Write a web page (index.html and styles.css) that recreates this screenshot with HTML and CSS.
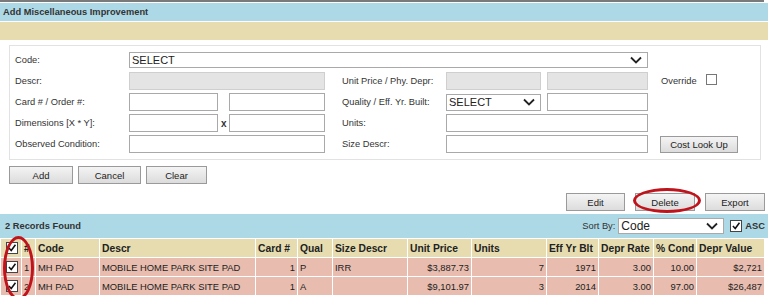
FILE: index.html
```html
<!DOCTYPE html>
<html lang="en">
<head>
    <meta charset="UTF-8">
    <title>Add Miscellaneous Improvement</title>
    <link rel="stylesheet" href="styles.css">
</head>
<body>
    <div class="top-line"></div>
    <div class="title-bar">Add Miscellaneous Improvement</div>
    <div class="tan-bar"></div>

    <!-- Entry form -->
    <div class="form-box">
        <div class="form-grid">
            <label class="lbl">Code:</label>
            <select class="sel sel-code"><option>SELECT</option></select>
            <div></div>

            <label class="lbl">Descr:</label>
            <input class="inp span-3 ro" type="text" readonly>
            <div></div>
            <label class="lbl">Unit Price / Phy. Depr:</label>
            <input class="inp ro" type="text" readonly>
            <div></div>
            <input class="inp ro" type="text" readonly>
            <div class="override">Override <span class="box"></span></div>

            <label class="lbl">Card # / Order #:</label>
            <input class="inp" type="text">
            <div></div>
            <input class="inp" type="text">
            <div></div>
            <label class="lbl">Quality / Eff. Yr. Built:</label>
            <select class="sel"><option>SELECT</option></select>
            <div></div>
            <input class="inp" type="text">
            <div></div>

            <label class="lbl">Dimensions [X * Y]:</label>
            <input class="inp" type="text">
            <div class="times">x</div>
            <input class="inp" type="text">
            <div></div>
            <label class="lbl">Units:</label>
            <input class="inp span-3" type="text">
            <div></div>

            <label class="lbl">Observed Condition:</label>
            <input class="inp span-3" type="text">
            <div></div>
            <label class="lbl">Size Descr:</label>
            <input class="inp span-3" type="text">
            <div><button class="btn btn-lookup">Cost Look Up</button></div>
        </div>
    </div>

    <div class="form-actions">
        <button class="btn w-add">Add</button>
        <button class="btn w-cancel">Cancel</button>
        <button class="btn w-clear">Clear</button>
    </div>

    <div class="grid-actions">
        <button class="btn w-edit">Edit</button>
        <button class="btn w-delete">Delete<span class="ring ring-delete"></span></button>
        <button class="btn w-export">Export</button>
    </div>

    <!-- Results -->
    <div class="records-bar">
        <span class="found">2 Records Found</span>
        <div class="sort">
            <span>Sort By:</span>
            <select class="sel sel-sort"><option>Code</option></select>
            <span class="chk"><svg viewBox="0 0 13 13"><path d="M2.5 6.5l3 3.2 5.5-7.5"/></svg></span>
            <span class="asc">ASC</span>
        </div>
    </div>

    <div class="table-wrap">
        <span class="ring ring-checks"></span>
        <table class="results">
            <colgroup>
                <col style="width:20px"><col style="width:13px"><col style="width:63px"><col style="width:155px">
                <col style="width:41px"><col style="width:34px"><col style="width:74px"><col style="width:63px">
                <col style="width:74px"><col style="width:51px"><col style="width:54px"><col style="width:42px">
                <col style="width:67px">
            </colgroup>
            <thead>
                <tr>
                    <th><span class="chk"><svg viewBox="0 0 13 13"><path d="M2.5 6.5l3 3.2 5.5-7.5"/></svg></span></th>
                    <th>#</th>
                    <th>Code</th>
                    <th>Descr</th>
                    <th>Card #</th>
                    <th>Qual</th>
                    <th>Size Descr</th>
                    <th>Unit Price</th>
                    <th>Units</th>
                    <th>Eff Yr Blt</th>
                    <th>Depr Rate</th>
                    <th>% Cond</th>
                    <th>Depr Value</th>
                </tr>
            </thead>
            <tbody>
                <tr>
                    <td><span class="chk"><svg viewBox="0 0 13 13"><path d="M2.5 6.5l3 3.2 5.5-7.5"/></svg></span></td>
                    <td>1</td>
                    <td>MH PAD</td>
                    <td>MOBILE HOME PARK SITE PAD</td>
                    <td class="num">1</td>
                    <td>P</td>
                    <td>IRR</td>
                    <td class="num">$3,887.73</td>
                    <td class="num">7</td>
                    <td class="num">1971</td>
                    <td class="num">3.00</td>
                    <td class="num">10.00</td>
                    <td class="num">$2,721</td>
                </tr>
                <tr>
                    <td><span class="chk"><svg viewBox="0 0 13 13"><path d="M2.5 6.5l3 3.2 5.5-7.5"/></svg></span></td>
                    <td>2</td>
                    <td>MH PAD</td>
                    <td>MOBILE HOME PARK SITE PAD</td>
                    <td class="num">1</td>
                    <td>A</td>
                    <td></td>
                    <td class="num">$9,101.97</td>
                    <td class="num">3</td>
                    <td class="num">2014</td>
                    <td class="num">3.00</td>
                    <td class="num">97.00</td>
                    <td class="num">$26,487</td>
                </tr>
            </tbody>
        </table>
    </div>
</body>
</html>
```

FILE: styles.css
```css
* {
    margin: 0;
    padding: 0;
    box-sizing: border-box;
}

body {
    font-family: 'Liberation Sans', Arial, sans-serif;
    font-size: 9.3px;
    color: #333;
    background: #fff;
    width: 768px;
    overflow: hidden;
}

/* Header bars */
.top-line {
    width: 764px;
    height: 2px;
    background: #7a7a7a;
    margin-bottom: 1px;
}

.title-bar {
    height: 18px;
    line-height: 18px;
    background: #add8e6;
    font-weight: bold;
    color: #333;
    padding-left: 3px;
}

.tan-bar {
    height: 18px;
    margin-top: 1px;
    background: #e6dcb0;
}

/* Form */
.form-box {
    margin: 5px 7px 0 9px;
    border: 1px solid #e2e2e2;
    padding: 5px 0 6px 5px;
}

.form-grid {
    display: grid;
    grid-template-columns: 114px 89px 11px 96px 17px 104px 95px 6px 101px auto;
    grid-auto-rows: 18px;
    row-gap: 3px;
    align-items: center;
}

.lbl {
    color: #333;
}

.inp {
    height: 18px;
    width: 100%;
    border: 1px solid #a9a9a9;
    background: #fff;
    font: inherit;
}

.inp.ro {
    background: #e4e4e4;
    border-color: #cfcfcf;
}

.span-3 {
    grid-column: span 3;
}

.sel {
    -webkit-appearance: none;
    appearance: none;
    height: 17px;
    width: 100%;
    border: 1px solid #a9a9a9;
    background: #fff url('data:image/svg+xml;utf8,<svg xmlns="http://www.w3.org/2000/svg" width="12" height="8" viewBox="0 0 12 8"><path d="M1 1.5l5 5 5-5" fill="none" stroke="%23222" stroke-width="1.8"/></svg>') no-repeat right 5px center;
    font-family: 'Liberation Sans', Arial, sans-serif;
    font-size: 11px;
    color: #222;
    padding-left: 2px;
    line-height: 15px;
}

.sel-code {
    grid-column: span 8;
    height: 16px;
}

.times {
    font-weight: bold;
    font-size: 10px;
    padding-left: 3px;
}

.override {
    padding-left: 13px;
    display: flex;
    align-items: center;
    gap: 9px;
}

.override .box {
    width: 11px;
    height: 11px;
    border: 1px solid #777;
    background: #fff;
    margin-top: -4px;
}

/* Buttons */
.btn {
    position: relative;
    height: 18px;
    border: 1px solid #9a9a9a;
    background: linear-gradient(#f4f4f4, #dcdcdc);
    font-family: 'Liberation Sans', Arial, sans-serif;
    font-size: 9.5px;
    color: #222;
}

.btn-lookup {
    margin-left: 12px;
    width: 78px;
    height: 17px;
}

.form-actions {
    display: flex;
    gap: 5px;
    margin: 6px 0 0 9px;
}

.w-add { width: 64px; }
.w-cancel { width: 63px; }
.w-clear { width: 61px; }

.grid-actions {
    display: flex;
    justify-content: flex-end;
    gap: 10px;
    margin: 9px 3px 0 0;
}

.w-edit { width: 59px; }
.w-delete { width: 60px; }
.w-export { width: 60px; }

/* Hand-drawn annotation rings */
.ring {
    position: absolute;
    border: 3px solid #c0141c;
    border-radius: 50%;
    pointer-events: none;
}

.ring-delete {
    left: -3px;
    top: -6px;
    width: 68px;
    height: 25px;
}

/* Records bar */
.records-bar {
    height: 24px;
    margin-top: 3px;
    background: #add8e6;
    display: flex;
    align-items: center;
    justify-content: space-between;
    padding: 0 3px 0 5px;
}

.found {
    font-weight: bold;
    color: #333;
}

.sort {
    display: flex;
    align-items: center;
    gap: 3px;
}

.sel-sort {
    width: 106px;
    height: 16px;
    font-size: 12px;
    margin-right: 3px;
}

.asc {
    font-weight: bold;
    color: #333;
}

.chk {
    display: inline-block;
    width: 12px;
    height: 12px;
    border: 1px solid #444;
    background: #fff;
    vertical-align: middle;
}

.chk svg {
    display: block;
    width: 10px;
    height: 10px;
}

.chk path {
    fill: none;
    stroke: #111;
    stroke-width: 2;
}

/* Results table */
.table-wrap {
    position: relative;
    width: 766px;
}

.ring-checks {
    left: 3px;
    top: -2px;
    width: 31px;
    height: 64px;
}

.results {
    border-collapse: separate;
    border-spacing: 1px;
    table-layout: fixed;
    width: 765px;
    font-size: 9.4px;
}

.results th {
    background: #e6dcb0;
    font-weight: bold;
    font-size: 10.3px;
    text-align: left;
    height: 18px;
    padding: 0 2px;
    color: #222;
    white-space: nowrap;
}

.results td {
    background: #e8bdaf;
    height: 18px;
    padding: 0 2px;
    color: #222;
    white-space: nowrap;
}

.results th:first-child,
.results td:first-child {
    padding-left: 5px;
}

.results td.num {
    text-align: right;
}
```
